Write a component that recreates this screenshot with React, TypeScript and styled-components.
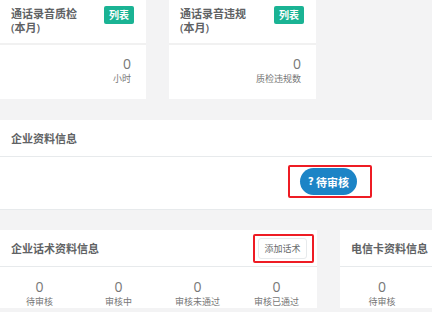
import styled, { createGlobalStyle } from "styled-components";

const GlobalStyle = createGlobalStyle`
  html, body {
    margin: 0;
    padding: 0;
    background: #f3f3f4;
    font-family: "Open Sans", "Noto Sans CJK SC", sans-serif;
  }
`;

const monthly = [
  { title: "通话录音质检", unit: "小时" },
  { title: "通话录音违规", unit: "质检违规数" },
];

const scriptStats = ["待审核", "审核中", "审核未通过", "审核已通过"];

function App() {
  return (
    <Page>
      <GlobalStyle />
      <TopRow>
        {monthly.map((m) => (
          <SmallCard key={m.title}>
            <SmallHead>
              <SmallTitle>
                <div>{m.title}</div>
                <div>(本月)</div>
              </SmallTitle>
              <Badge>列表</Badge>
            </SmallHead>
            <SmallBody>
              <Number>0</Number>
              <Label>{m.unit}</Label>
            </SmallBody>
          </SmallCard>
        ))}
      </TopRow>

      <Card>
        <Head>
          <Title>企业资料信息</Title>
        </Head>
        <StatusBody>
          <Marked $padX={[10, 13]} $padY={1}>
            <PendingButton>
              <Question>?</Question>待审核
            </PendingButton>
          </Marked>
        </StatusBody>
      </Card>

      <BottomRow>
        <Card $width={317}>
          <Head $padRight={3}>
            <Title>企业话术资料信息</Title>
            <Marked $padX={[3, 5]} $padY={2}>
              <AddButton>添加话术</AddButton>
            </Marked>
          </Head>
          <Stats $col={79}>
            {scriptStats.map((s) => (
              <Stat key={s}>
                <Number>0</Number>
                <Label>{s}</Label>
              </Stat>
            ))}
          </Stats>
        </Card>
        <Card $width={120}>
          <Head>
            <Title>电信卡资料信息</Title>
          </Head>
          <Stats $col={84}>
            <Stat>
              <Number>0</Number>
              <Label>待审核</Label>
            </Stat>
          </Stats>
        </Card>
      </BottomRow>
    </Page>
  );
}

const Page = styled.div`
  width: 432px;
  height: 312px;
  overflow: hidden;
  display: flex;
  flex-direction: column;
  gap: 20px;
`;

const TopRow = styled.div`
  display: flex;
  gap: 23px;
  margin-bottom: 1px;
`;

const SmallCard = styled.div`
  width: 147px;
  display: flex;
  flex-direction: column;
  flex-shrink: 0;

  &:first-child {
    width: 146px;
  }
`;

const SmallHead = styled.div`
  height: 45px;
  box-sizing: border-box;
  background: #fff;
  border-bottom: 2px solid #f1f1f1;
  padding: 6px 12px 0 11px;
  display: flex;
  justify-content: space-between;
  align-items: flex-start;
`;

const SmallTitle = styled.div`
  font-size: 11px;
  line-height: 14px;
  font-weight: 600;
  color: #606264;
  padding-top: 1px;
  white-space: nowrap;
`;

const Badge = styled.span`
  background: #1ab394;
  color: #fff;
  font-size: 10px;
  font-weight: 700;
  border-radius: 2px;
  width: 30px;
  height: 18px;
  line-height: 18px;
  text-align: center;
`;

const SmallBody = styled.div`
  background: #fff;
  height: 54px;
  box-sizing: border-box;
  padding: 9px 15px 0 0;
  display: flex;
  flex-direction: column;
  align-items: flex-end;
`;

const Number = styled.div`
  font-size: 14px;
  line-height: 19px;
  color: #777;
`;

const Label = styled.div`
  font-size: 9px;
  line-height: 12px;
  color: #777;
  white-space: nowrap;
`;

const Card = styled.div<{ $width?: number }>`
  background: #fff;
  width: ${(p) => (p.$width ? `${p.$width}px` : "100%")};
  flex-shrink: 0;
`;

const Head = styled.div<{ $padRight?: number }>`
  height: 37px;
  box-sizing: border-box;
  border-bottom: 1px solid #e7eaec;
  padding: 0 ${(p) => p.$padRight ?? 10}px 0 11px;
  display: flex;
  justify-content: space-between;
  align-items: center;
`;

const Title = styled.div`
  font-size: 11px;
  font-weight: 600;
  color: #606264;
`;

const StatusBody = styled.div`
  height: 53px;
  box-sizing: border-box;
  border-bottom: 1px solid #e7eaec;
  padding: 8px 0 0 288px;
  display: flex;
  align-items: flex-start;
`;

const Marked = styled.div<{ $padX: [number, number]; $padY: number }>`
  border: 2px solid #ee1c24;
  border-radius: 2px;
  padding: ${(p) => `${p.$padY}px ${p.$padX[1]}px ${p.$padY}px ${p.$padX[0]}px`};
  display: flex;
`;

const PendingButton = styled.div`
  background: #1c84c6;
  color: #fff;
  width: 57px;
  height: 27px;
  border-radius: 14px;
  font-size: 11px;
  font-weight: 700;
  display: flex;
  align-items: center;
  justify-content: center;
  gap: 2px;
`;

const Question = styled.span`
  font-family: "DejaVu Sans", sans-serif;
  font-size: 10px;
  font-weight: 700;
`;

const AddButton = styled.div`
  border: 1px solid #e7eaec;
  border-radius: 3px;
  background: #fff;
  color: #676a6c;
  font-size: 9px;
  width: 49px;
  height: 21px;
  box-sizing: border-box;
  display: flex;
  align-items: center;
  justify-content: center;
`;

const BottomRow = styled.div`
  display: flex;
  gap: 23px;
`;

const Stats = styled.div<{ $col: number }>`
  display: grid;
  grid-template-columns: repeat(auto-fill, ${(p) => p.$col}px);
  padding-top: 10px;
`;

const Stat = styled.div`
  display: flex;
  flex-direction: column;
  align-items: center;
`;

export default App;
